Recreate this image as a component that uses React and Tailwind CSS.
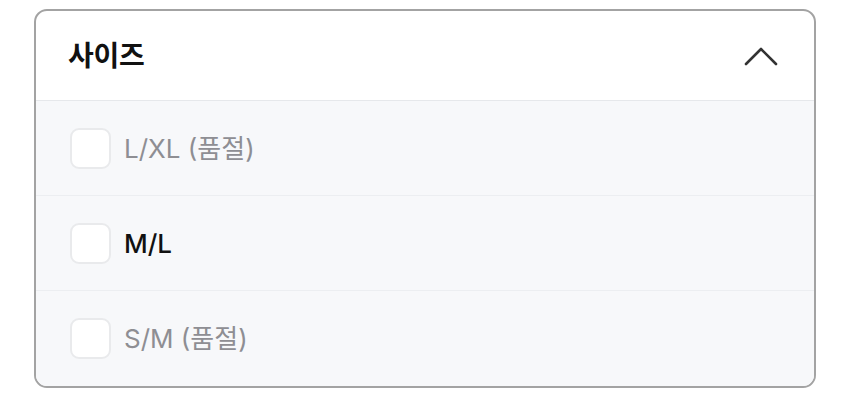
const options = [
  { label: 'L/XL (품절)', soldOut: true },
  { label: 'M/L', soldOut: false },
  { label: 'S/M (품절)', soldOut: true },
]

export default function App() {
  return (
    <div className="w-[850px] h-[402px] bg-white pt-[9px] pl-[34px]" style={{ fontFamily: 'Inter, "Noto Sans CJK KR", sans-serif' }}>
      <div className="w-[782px] rounded-[13px] border-2 border-[#a3a3a3] overflow-hidden bg-white">
        <div className="h-[90px] flex items-center justify-between pl-[32px] pr-[36px] border-b border-[#e6e8eb]">
          <h3 className="text-[28px] font-bold text-[#111] tracking-[-0.3px]">사이즈</h3>
          <svg width="34" height="20" viewBox="0 0 34 20" fill="none">
            <polyline points="2,18 17,3 32,18" stroke="#333" strokeWidth="2.6" strokeLinecap="round" strokeLinejoin="round" />
          </svg>
        </div>
        <ul className="bg-[#f7f8fa]">
          {options.map((o, i) => (
            <li key={o.label} className={`h-[95px] flex items-center gap-[13px] pl-[34px] ${i < options.length - 1 ? 'border-b border-[#eceef1]' : ''}`}>
              <span className="w-[41px] h-[41px] rounded-[9px] border-2 border-[#e9eaec] bg-white" />
              <span className={`text-[26px] ${o.soldOut ? 'text-[#8e8e93]' : 'text-[#111] font-medium'}`}>{o.label}</span>
            </li>
          ))}
        </ul>
      </div>
    </div>
  )
}
